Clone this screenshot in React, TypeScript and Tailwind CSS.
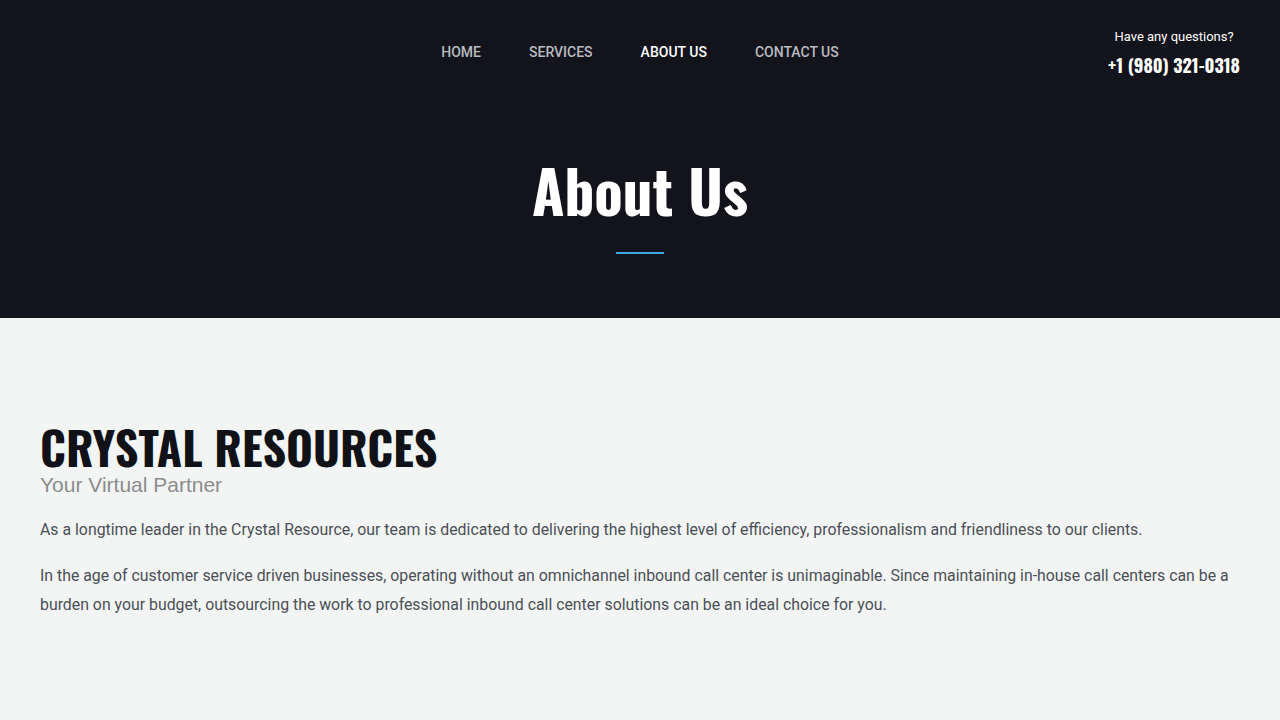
import React from 'react';

const navItems = [
  { label: 'HOME', active: false },
  { label: 'SERVICES', active: false },
  { label: 'ABOUT US', active: true },
  { label: 'CONTACT US', active: false },
];

const condensed = "font-['Oswald','DejaVu_Sans',sans-serif]";

export default function App() {
  return (
    <div className="min-h-screen bg-[#f3f5f5] font-['Roboto',sans-serif]">
      <header className="bg-[#12131b] h-[318px] flex flex-col">
        <div className="relative h-[104px] flex items-center justify-center">
          <nav className="flex items-center gap-12">
            {navItems.map((item) => (
              <a
                key={item.label}
                href="#"
                className={
                  item.active
                    ? 'text-[14px] font-medium text-white'
                    : 'text-[14px] font-medium text-[#b9bbc0]'
                }
              >
                {item.label}
              </a>
            ))}
          </nav>
          <div className="absolute right-[40px] top-[29px] flex flex-col items-center">
            <span className="text-[13px] text-white leading-[16px]">Have any questions?</span>
            <span className={`${condensed} font-bold text-[18px] text-white leading-[28px] mt-[6px]`}>
              +1 (980) 321-0318
            </span>
          </div>
        </div>
        <div className="flex flex-col items-center pt-[56px]">
          <h1 className={`${condensed} font-bold text-white text-[59px] leading-[59px]`}>About Us</h1>
          <span className="block w-12 h-[2px] bg-[#3ea8e5] mt-[33px]" />
        </div>
      </header>

      <main className="px-10 pt-[105px] pb-[100px]">
        <h2 className={`${condensed} font-bold text-[#111218] text-[46px] leading-[46px]`}>CRYSTAL RESOURCES</h2>
        <p className="font-['Liberation_Sans',Arial,sans-serif] text-[21px] leading-[24px] text-[#8c8c8c] mt-[4px]">
          Your Virtual Partner
        </p>
        <p className="mt-[18px] text-[15.85px] leading-[29px] text-[#4b4f55]">
          As a longtime leader in the Crystal Resource, our team is dedicated to delivering the highest level of efficiency, professionalism and friendliness to our clients.
        </p>
        <p className="mt-[17px] text-[15.85px] leading-[29px] text-[#4b4f55]">
          In the age of customer service driven businesses, operating without an omnichannel inbound call center is unimaginable. Since maintaining in-house call centers can be a burden on your budget, outsourcing the work to professional inbound call center solutions can be an ideal choice for you.
        </p>
      </main>
    </div>
  );
}
